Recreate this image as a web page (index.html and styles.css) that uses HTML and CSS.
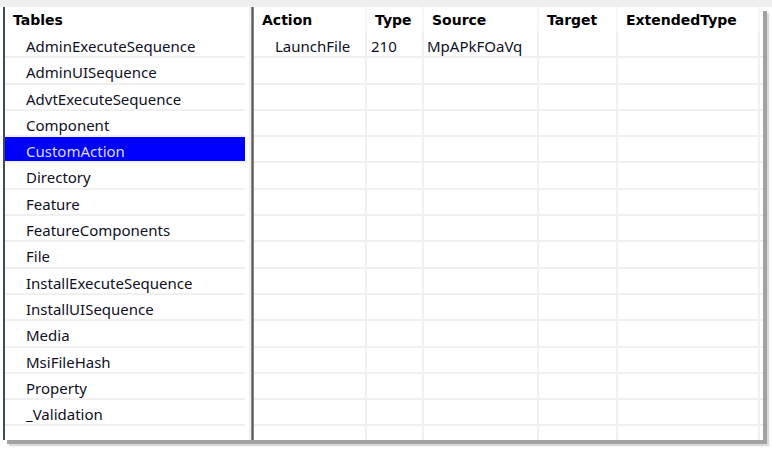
FILE: index.html
```html
<!DOCTYPE html>
<html>
<head>
<meta charset="utf-8">
<link rel="stylesheet" href="styles.css">
</head>
<body>
<div class="screen">
  <div class="topbar"></div>
  <div class="frame">
    <div class="left">
      <div class="lhead">Tables</div>
      <div class="lrow">AdminExecuteSequence</div>
      <div class="lrow">AdminUISequence</div>
      <div class="lrow">AdvtExecuteSequence</div>
      <div class="lrow">Component</div>
      <div class="lrow sel">CustomAction</div>
      <div class="lrow">Directory</div>
      <div class="lrow">Feature</div>
      <div class="lrow">FeatureComponents</div>
      <div class="lrow">File</div>
      <div class="lrow">InstallExecuteSequence</div>
      <div class="lrow">InstallUISequence</div>
      <div class="lrow">Media</div>
      <div class="lrow">MsiFileHash</div>
      <div class="lrow">Property</div>
      <div class="lrow">_Validation</div>
      <div class="lrow"></div>
    </div>
    <div class="divider"></div>
    <div class="right">
      <div class="grid">
        <div class="hc">Action</div>
        <div class="hc">Type</div>
        <div class="hc">Source</div>
        <div class="hc">Target</div>
        <div class="hc">ExtendedType</div>
        <div class="hc last"></div>

        <div class="c c-action">LaunchFile</div>
        <div class="c c-type">210</div>
        <div class="c c-src">MpAPkFOaVq</div>
        <div class="c"></div>
        <div class="c"></div>
        <div class="c last"></div>
      </div>
      <div class="grid empty" id="empty"></div>
    </div>
  </div>
</div>
<script src="script.js"></script>
</body>
</html>
```
FILE: script.js
```js
var g = document.getElementById('empty');
for (var r = 0; r < 15; r++) {
  for (var c = 0; c < 6; c++) {
    var d = document.createElement('div');
    d.className = 'c' + (c === 5 ? ' last' : '');
    g.appendChild(d);
  }
}
```
FILE: styles.css
```css
html, body {
  margin: 0;
  padding: 0;
  background: #ffffff;
}
.screen {
  width: 772px;
  height: 449px;
  overflow: hidden;
  background: #ffffff;
  font-family: "Noto Sans", "Liberation Sans", sans-serif;
  font-size: 15px;
  color: #101024;
}
.topbar {
  height: 7px;
  background: #efefef;
}
.frame {
  display: flex;
  margin-left: 3px;
  width: 760px;
  height: 433px;
  box-sizing: border-box;
  border-left: 2px solid #3d4c5e;
  background: #ffffff;
  box-shadow: 4px 4px 0 0 #a2a2a2, 6px 6px 1px 0 #dadada;
  overflow: hidden;
}
.left {
  width: 246px;
  flex: none;
  box-sizing: border-box;
  border-right: 2px solid #f0f0f0;
  padding-right: 4px;
  display: flex;
  flex-direction: column;
  overflow: hidden;
}
.lhead {
  height: 25px;
  flex: none;
  box-sizing: border-box;
  padding-left: 8px;
  padding-top: 4px;
  font-family: "DejaVu Sans", sans-serif;
  font-weight: bold;
  font-size: 14px;
  line-height: 18px;
  color: #000;
}
.lrow {
  height: 26.3px;
  flex: none;
  box-sizing: border-box;
  border-bottom: 2px solid #f0f0f0;
  padding-left: 21px;
  padding-top: 5px;
  line-height: 19px;
  white-space: nowrap;
}
.lrow.sel {
  background: #0000ff;
  color: #dcdcff;
}
.divider {
  width: 3px;
  flex: none;
  background: linear-gradient(to right, #a8a8a8, #5c5c5c 50%, #9a9a9a);
}
.right {
  flex: 1;
  display: flex;
  flex-direction: column;
  overflow: hidden;
}
.grid {
  display: grid;
  grid-template-columns: 113px 57px 115px 79px 142px 1fr;
}
.hc {
  height: 25px;
  box-sizing: border-box;
  padding-left: 8px;
  padding-top: 4px;
  font-family: "DejaVu Sans", sans-serif;
  font-weight: bold;
  font-size: 14px;
  line-height: 18px;
  color: #000;
  border-right: 2px solid #f6f6f6;
  white-space: nowrap;
}
.hc:first-child { padding-left: 8px; }
.c {
  height: 26.3px;
  box-sizing: border-box;
  border-right: 2px solid #f0f0f0;
  border-bottom: 2px solid #f0f0f0;
  padding-top: 5px;
  line-height: 19px;
  white-space: nowrap;
}
.last {
  border-right: none;
}
.c-action { padding-left: 21px; }
.c-type { padding-left: 4px; }
.c-src { padding-left: 3px; }
```
